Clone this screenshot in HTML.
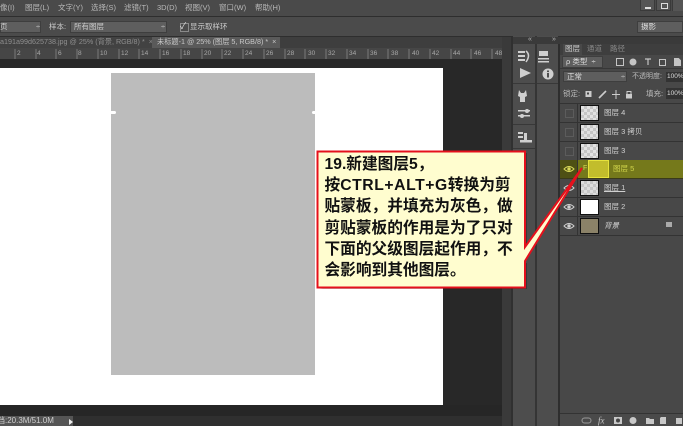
<!DOCTYPE html>
<html><head><meta charset="utf-8"><style>
html,body{margin:0;padding:0;background:#3c3c3c}
#p{position:relative;width:683px;height:426px;overflow:hidden;background:#444;font-family:"Liberation Sans","Noto Sans CJK SC",sans-serif}
#p div{position:absolute}
#c{left:0;top:0;width:683px;height:426px;filter:blur(.35px)}
.t{color:#b8b8b8;font-size:7.5px;line-height:12px;white-space:nowrap;position:absolute}
.r{position:absolute;left:560px;width:123px;height:18px;border-bottom:1px solid #333;background:#484848}
.th{position:absolute;left:20px;top:1px;width:17px;height:14px;border:1px solid #111;background:#e2e2e2;background-image:linear-gradient(45deg,#c6c6c6 25%,transparent 25%,transparent 75%,#c6c6c6 75%),linear-gradient(45deg,#c6c6c6 25%,transparent 25%,transparent 75%,#c6c6c6 75%);background-size:6px 6px;background-position:0 0,3px 3px}
.n{position:absolute;left:44px;top:3px;color:#d0d0d0;font-size:7.5px;line-height:12px;white-space:nowrap}
.eb{position:absolute;left:0;top:0;width:17px;height:18px;border-right:1px solid #333}
.sq{position:absolute;left:5px;top:5px;width:7px;height:7px;border:1px solid #5c5c5c}
</style></head><body><div id="p"><div id="c">

<div style="left:0;top:0;width:683px;height:16px;background:#4a4a4a"></div>
<div style="left:0;top:16px;width:683px;height:1px;background:#2e2e2e"></div>
<span class="t" style="left:0;top:2px">像(I)</span>
<span class="t" style="left:25px;top:2px">图层(L)</span>
<span class="t" style="left:58px;top:2px">文字(Y)</span>
<span class="t" style="left:91px;top:2px">选择(S)</span>
<span class="t" style="left:124px;top:2px">滤镜(T)</span>
<span class="t" style="left:157px;top:2px">3D(D)</span>
<span class="t" style="left:185px;top:2px">视图(V)</span>
<span class="t" style="left:219px;top:2px">窗口(W)</span>
<span class="t" style="left:255px;top:2px">帮助(H)</span>
<div style="left:640px;top:0;width:15px;height:11px;background:#555;border:1px solid #3a3a3a;border-top:0;box-sizing:border-box"></div>
<div style="left:645px;top:7px;width:6px;height:2px;background:#ddd"></div>
<div style="left:656px;top:0;width:15px;height:11px;background:#555;border:1px solid #3a3a3a;border-top:0;box-sizing:border-box"></div>
<div style="left:661px;top:3px;width:5px;height:4px;border:1px solid #ddd"></div>
<div style="left:672px;top:0;width:11px;height:11px;background:#555;border-left:1px solid #3a3a3a"></div>

<div style="left:0;top:17px;width:683px;height:19px;background:#4b4b4b"></div>
<div style="left:0;top:36px;width:683px;height:1px;background:#2e2e2e"></div>
<div style="left:0;top:21px;width:41px;height:12px;background:#5e5e5e;border:1px solid #3e3e3e;box-sizing:border-box"></div>
<span class="t" style="left:0;top:21px;color:#ccc">页</span>
<span class="t" style="left:36px;top:21px">÷</span>
<span class="t" style="left:49px;top:21px;color:#ccc">样本:</span>
<div style="left:70px;top:21px;width:97px;height:12px;background:#5e5e5e;border:1px solid #3e3e3e;box-sizing:border-box"></div>
<span class="t" style="left:74px;top:21px;color:#ccc">所有图层</span>
<span class="t" style="left:161px;top:21px">÷</span>
<div style="left:180px;top:23px;width:7px;height:7px;border:1px solid #8a8a8a"></div>
<span class="t" style="left:180px;top:20px;color:#ddd;font-size:9px">✓</span>
<span class="t" style="left:190px;top:21px;color:#ccc">显示取样环</span>
<div style="left:637px;top:21px;width:46px;height:12px;background:#5e5e5e;border:1px solid #3e3e3e;box-sizing:border-box"></div>
<span class="t" style="left:641px;top:21px;color:#ddd">摄影</span>

<div style="left:0;top:37px;width:512px;height:11px;background:#3e3e3e"></div>
<div style="left:0;top:37px;width:152px;height:11px;background:#424242"></div>
<span class="t" style="left:0;top:36px;font-size:7.2px;color:#8e8e8e">a191a99d625738.jpg @ 25% (背景, RGB/8) *&nbsp; ×</span>
<div style="left:152px;top:37px;width:128px;height:11px;background:#5a5a5a"></div>
<span class="t" style="left:157px;top:36px;font-size:7.2px;color:#c8c8c8">未标题-1 @ 25% (图层 5, RGB/8) *&nbsp; ×</span>

<div style="left:0;top:48px;width:502px;height:11px;background:#464646"></div>
<svg style="position:absolute;left:0;top:47px" width="502" height="12">
<g fill="#a8a8a8" font-size="6.5" font-family="Liberation Sans"><text x="17" y="8">2</text><text x="37" y="8">4</text><text x="58" y="8">6</text><text x="78" y="8">8</text><text x="100" y="8">10</text><text x="121" y="8">12</text><text x="141" y="8">14</text><text x="162" y="8">16</text><text x="183" y="8">18</text><text x="204" y="8">20</text><text x="224" y="8">22</text><text x="245" y="8">24</text><text x="266" y="8">26</text><text x="287" y="8">28</text><text x="308" y="8">30</text><text x="328" y="8">32</text><text x="349" y="8">34</text><text x="370" y="8">36</text><text x="391" y="8">38</text><text x="412" y="8">40</text><text x="432" y="8">42</text><text x="453" y="8">44</text><text x="474" y="8">46</text><text x="495" y="8">48</text></g>
<path d="M15 2v10M36 2v10M56 2v10M77 2v10M98 2v10M119 2v10M139 2v10M160 2v10M181 2v10M202 2v10M222 2v10M243 2v10M264 2v10M285 2v10M305 2v10M326 2v10M347 2v10M368 2v10M388 2v10M409 2v10M430 2v10M451 2v10M471 2v10M492 2v10" stroke="#7a7a7a" stroke-width="1"/>
</svg>

<div style="left:0;top:59px;width:502px;height:346px;background:#282828"></div>
<div style="left:0;top:68px;width:443px;height:337px;background:#fff"></div>
<div style="left:111px;top:73px;width:204px;height:302px;background:#bcbcbc"></div>
<div style="left:110px;top:111px;width:6px;height:3px;background:#fff;border-radius:2px"></div>
<div style="left:312px;top:111px;width:5px;height:3px;background:#fff;border-radius:2px"></div>

<div style="left:0;top:405px;width:502px;height:11px;background:#262626"></div>
<div style="left:0;top:416px;width:512px;height:10px;background:#2f2f2f"></div>
<div style="left:0;top:416px;width:73px;height:10px;background:#555"></div>
<span class="t" style="left:-3px;top:415px;font-size:8px;color:#d0d0d0">档:20.3M/51.0M</span>
<div style="left:69px;top:419px;width:0;height:0;border-left:4px solid #eee;border-top:3px solid transparent;border-bottom:3px solid transparent"></div>

<div style="left:502px;top:37px;width:11px;height:389px;background:#3a3a3a"></div>
<div style="left:511px;top:37px;width:2px;height:389px;background:#303030"></div>
<div style="left:513px;top:36px;width:23px;height:390px;background:#4d4d4d"></div>
<div style="left:535px;top:36px;width:2px;height:390px;background:#353535"></div>
<div style="left:537px;top:36px;width:21px;height:390px;background:#4d4d4d"></div>
<div style="left:558px;top:36px;width:2px;height:390px;background:#2e2e2e"></div>
<div style="left:513px;top:37px;width:170px;height:7px;background:#3a3a3a"></div>
<span class="t" style="left:528px;top:34px;font-size:7px">«</span>
<span class="t" style="left:552px;top:34px;font-size:7px">»</span>
<svg style="position:absolute;left:513px;top:44px" width="46" height="120">
<g fill="#d0d0d0">
<rect x="5" y="7" width="7" height="2"/><rect x="5" y="11" width="7" height="2"/><rect x="5" y="15" width="7" height="2"/>
<path d="M13 7q5 4 0 11" stroke="#d0d0d0" fill="none" stroke-width="1.5"/>
<path d="M7 24l11 5-11 5z"/>
<rect x="26" y="7" width="9" height="5"/><rect x="25" y="14" width="11" height="1.5"/><rect x="25" y="17" width="11" height="1.5"/>
<circle cx="35" cy="30" r="5.5"/>
<path d="M6 46l2 3h3l2-3 1 6-2 1v5h-5v-5l-2-1z"/>
<rect x="5" y="66" width="12" height="1.5"/><rect x="5" y="71" width="12" height="1.5"/><circle cx="14" cy="67" r="2"/><circle cx="9" cy="72" r="2"/>
<rect x="5" y="88" width="5" height="2"/><rect x="5" y="92" width="5" height="2"/><rect x="11" y="89" width="3" height="7"/><rect x="7" y="96" width="12" height="2.5"/>
</g>
<rect x="34" y="26.500" width="2" height="1.600" fill="#4d4d4d"/><rect x="34" y="29" width="2" height="4.500" fill="#4d4d4d"/>
<path d="M0 39.500h22M24 39.500h21M0 80.500h22M0 104.500h22" stroke="#383838"/>
</svg>

<div style="left:560px;top:44px;width:123px;height:382px;background:#484848"></div>
<div style="left:560px;top:44px;width:123px;height:11px;background:#3e3e3e"></div>
<div style="left:563px;top:44px;width:19px;height:11px;background:#484848"></div>
<span class="t" style="left:565px;top:43px;color:#ccc">图层</span>
<span class="t" style="left:587px;top:43px;color:#888">通道</span>
<span class="t" style="left:610px;top:43px;color:#888">路径</span>

<div style="left:562px;top:56px;width:41px;height:12px;background:#5e5e5e;border:1px solid #3e3e3e;box-sizing:border-box"></div>
<span class="t" style="left:566px;top:56px;color:#ddd">ρ 类型 &nbsp;÷</span>
<svg style="position:absolute;left:612px;top:56px" width="71" height="12">
<g fill="none" stroke="#c4c4c4">
<rect x="4.500" y="2.500" width="7" height="7"/>
<circle cx="21" cy="6" r="3" fill="#c4c4c4"/>
<path d="M33 3h6M36 3v6" stroke-width="1.200"/>
<rect x="47.500" y="3.500" width="6" height="6"/>
<path d="M62.500 2.500h4l2 2v5h-6z" fill="#c4c4c4"/>
</g></svg>

<div style="left:560px;top:68px;width:123px;height:1px;background:#373737"></div>
<div style="left:563px;top:71px;width:64px;height:11px;background:#5e5e5e;border:1px solid #3e3e3e;box-sizing:border-box"></div>
<span class="t" style="left:567px;top:71px;color:#ddd">正常</span>
<span class="t" style="left:621px;top:71px;color:#bbb">÷</span>
<span class="t" style="left:632px;top:71px;color:#bbb;font-size:7px">不透明度:</span>
<div style="left:666px;top:72px;width:17px;height:10px;background:#333"></div>
<span class="t" style="left:667px;top:71px;color:#ddd;font-size:6.500px">100%</span>

<span class="t" style="left:563px;top:88px;color:#bbb">锁定:</span>
<svg style="position:absolute;left:584px;top:88px" width="50" height="12">
<rect x="1.500" y="3" width="6" height="6" fill="#ccc"/><rect x="3" y="4.500" width="2" height="2" fill="#444"/>
<path d="M15 10l7-7" stroke="#ccc" stroke-width="1.600"/>
<path d="M32 2v9M28 6.500h8" stroke="#ccc"/>
<rect x="42" y="6" width="6" height="4.500" fill="#ccc"/><path d="M43 6V3.500h4V6" stroke="#ccc" fill="none"/>
</svg>
<span class="t" style="left:646px;top:88px;color:#bbb">填充:</span>
<div style="left:666px;top:88px;width:17px;height:11px;background:#333"></div>
<span class="t" style="left:667px;top:88px;color:#ddd;font-size:6.500px">100%</span>
<div style="left:560px;top:103px;width:123px;height:1px;background:#333"></div>

<div class="r" style="top:104px"><div class="eb"></div><div class="sq"></div><div class="th"></div><span class="n">图层 4</span></div>
<div class="r" style="top:123px"><div class="eb"></div><div class="sq"></div><div class="th"></div><span class="n">图层 3 拷贝</span></div>
<div class="r" style="top:142px"><div class="eb"></div><div class="sq"></div><div class="th"></div><span class="n">图层 3</span></div>
<div class="r" style="top:160px;background:#75791b;border-bottom:1px solid #3a3a1a"><div class="eb" style="background:#4e5014"></div><span class="n" style="left:53px;color:#cfd34a">图层 5</span>
<div style="left:28px;top:0;width:21px;height:18px;background:#c2bd2c;border:1px solid #e6e33c;box-sizing:border-box"></div>
<span class="t" style="left:23px;top:3px;color:#d8d850;font-size:7px">F</span></div>
<div class="r" style="top:179px"><div class="eb"></div><div class="th" style="background-color:#ddd"></div><span class="n" style="text-decoration:underline">图层 1</span></div>
<div class="r" style="top:198px"><div class="eb"></div><div class="th" style="background:#fff"></div><span class="n">图层 2</span></div>
<div class="r" style="top:217px"><div class="eb"></div><div class="th" style="background:#8b8268"></div><span class="n" style="font-style:italic;color:#ccc">背景</span><div style="left:106px;top:5px;width:6px;height:5px;background:#aaa"></div></div>

<svg style="position:absolute;left:560px;top:160px" width="18" height="80">
<g fill="none"><path d="M4 9q5-5 10 0q-5 5-10 0z" stroke="#d8d85a"/><circle cx="9" cy="9" r="1.700" fill="#d8d85a"/>
<path d="M4 28q5-5 10 0q-5 5-10 0z" stroke="#d0d0d0"/><circle cx="9" cy="28" r="1.700" fill="#d0d0d0"/>
<path d="M4 47q5-5 10 0q-5 5-10 0z" stroke="#d0d0d0"/><circle cx="9" cy="47" r="1.700" fill="#d0d0d0"/>
<path d="M4 66q5-5 10 0q-5 5-10 0z" stroke="#d0d0d0"/><circle cx="9" cy="66" r="1.700" fill="#d0d0d0"/></g></svg>

<div style="left:560px;top:413px;width:123px;height:1px;background:#333"></div>
<div style="left:560px;top:414px;width:123px;height:12px;background:#4a4a4a"></div>
<svg style="position:absolute;left:580px;top:414px" width="103" height="12">
<g fill="#c8c8c8"><path d="M2 6.500a2.500 2.500 0 0 1 2.500-2.500h4a2.500 2.500 0 0 1 0 5h-4a2.500 2.500 0 0 1-2.500-2.500z" fill="none" stroke="#999"/>
<text x="18" y="9.500" font-size="9" font-style="italic" font-family="Liberation Serif">fx</text>
<rect x="34" y="3" width="8" height="7"/><circle cx="38" cy="6.500" r="2" fill="#444"/>
<circle cx="53" cy="6.500" r="3.500"/><path d="M66 4h3l1 1h4v5h-8z"/><path d="M81 3h5v7h-6V4z"/><rect x="96" y="4" width="6" height="6"/></g></svg>
</div>

<svg style="position:absolute;left:0;top:0" width="683" height="426">
<path d="M319 153H527V248M527 263V289H319Z" fill="#000" fill-opacity=".25"/>
<path d="M317.500 151.500H525V247L582 168L525 261V287.500H317.500Z" fill="#fffdcf" stroke="#e5101c" stroke-width="2"/>
</svg>
<div style="left:324.500px;top:154px;width:200px;font-size:15.700px;line-height:21.200px;font-weight:700;color:#111;white-space:nowrap">19.新建图层5，<br>按<span style="letter-spacing:.6px">CTRL+ALT+G</span>转换为剪<br>贴蒙板，并填充为灰色，做<br>剪贴蒙板的作用是为了只对<br>下面的父级图层起作用，不<br>会影响到其他图层。</div>
</div></body></html>
